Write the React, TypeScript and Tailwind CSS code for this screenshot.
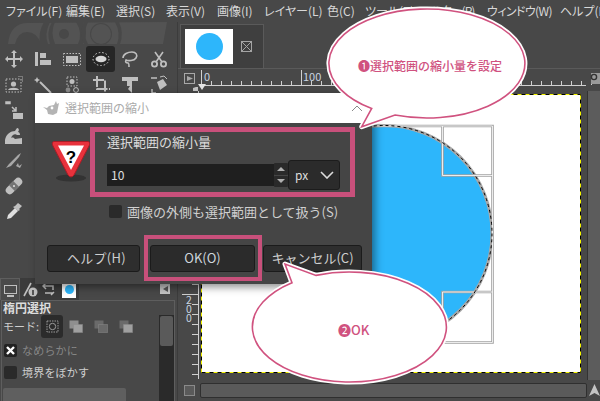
import React from "react";

const G = "#bfbfbf";
const Ico = ({ children, s = 20 }: { children: React.ReactNode; s?: number }) => (
  <svg width={s} height={s} viewBox="0 0 20 20" fill={G} stroke="none">{children}</svg>
);

const tools: Record<string, React.ReactNode> = {
  move: <path d="M10 1l3 3h-2v5h5V7l3 3-3 3v-2h-5v5h2l-3 3-3-3h2v-5H4v2l-3-3 3-3v2h5V4H7z" />,
  align: <><rect x="2" y="3" width="3" height="14" /><rect x="7" y="4" width="6" height="5" /><rect x="7" y="11" width="11" height="5" /></>,
  rect: <><rect x="4" y="7" width="12" height="7" /><rect x="1.5" y="4.5" width="17" height="12" fill="none" stroke={G} strokeWidth="1" strokeDasharray="1.5 1.5" /></>,
  ellipse: <><ellipse cx="10" cy="10" rx="5.5" ry="3.2" fill="#d8d8d8" /><ellipse cx="10" cy="10" rx="8" ry="6.5" fill="none" stroke="#d8d8d8" strokeDasharray="1.5 2" /></>,
  lasso: <path d="M3 9c0-4 5-6 9-6s6 3 4 6-8 3-10 2c-1 2 0 3 2 3 1 0 1 2 1 4" fill="none" stroke={G} strokeWidth="1.6" />,
  scissors: <><circle cx="5.5" cy="15" r="2.6" fill="none" stroke={G} strokeWidth="1.8" /><circle cx="14.5" cy="15" r="2.6" fill="none" stroke={G} strokeWidth="1.8" /><path d="M7 13l7-10M13 13L6 3" stroke={G} strokeWidth="1.6" /></>,
  fg: <><rect x="2" y="4" width="15" height="13" fill="none" stroke={G} strokeDasharray="1.5 1.5" /><circle cx="9.5" cy="9" r="2.6" /><path d="M4 15c1-3 10-3 11 0z" /><path d="M14 1h5v6h-1V2h-4z" fill="#7a7a7a" /></>,
  wand: <><path d="M7 7l11 11" stroke={G} strokeWidth="2" /><path d="M4 2l1 2 2 1-2 1-1 2-1-2-2-1 2-1z" /></>,
  color: <><rect x="5" y="2" width="10" height="9" fill="none" stroke={G} strokeDasharray="1.5 1.5" /><circle cx="10" cy="6.5" r="2.5" /><circle cx="6" cy="15" r="2.4" fill="#8a8a8a" /><circle cx="14" cy="15" r="2.4" fill="none" stroke={G} /></>,
  crop: <path d="M6 1v13h13M2 5h12v13" fill="none" stroke={G} strokeWidth="2" strokeDasharray="11 1.5" />,
  transform: <><path d="M2 2h16v4H12v12L8 14l2-3H7V6H2z" /></>,
  warp: <><path d="M8 7l6-3 4 6-7 5z" /><path d="M2 3h6M3 14v4h4" stroke={G} strokeWidth="1.4" fill="none" /><path d="M11 2l4-1 3 3" stroke={G} fill="none" /></>,
  path: <><path d="M2 1h4v1.5H2zM8 6l4 4M12 6v4H8" stroke={G} strokeWidth="1.5" fill="none" /><rect x="9" y="12" width="10" height="6" /></>,
  bucket: <path d="M1 18v-4c1-6 6-9 10-9 1-1 1-3 3-3l1 2-1 2c1 0 2 1 2 3h-3c-2-2-5 0-6 3 2-1 3 0 4 1l7-1v6z" />,
  ink: <path d="M2 17l3-4 9-9 3-2-2 4-8 9zM12 15l2-3 1 3 3-2-2 4z" fill="#a8a8a8" />,
  heal: <g transform="rotate(45 10 10)"><rect x="6" y="0" width="8" height="20" rx="4" /><rect x="6" y="7" width="8" height="6" fill="#747474" /><circle cx="10" cy="10" r="1" fill="#ddd" /></g>,
  pick: <><path d="M3 18l1-4 7-7 3 3-7 7z" fill="#e0e0e0" /><path d="M11 5l3-3 4 3-3 3 1 1-2 1-5-4z" /></>,
};

const toolRows: string[][] = [
  ["move", "align", "rect", "ellipse", "lasso", "scissors"],
  ["fg", "wand", "color", "crop", "transform", "warp"],
  ["path"], ["bucket"], ["ink"], ["heal"], ["pick"],
];

const Wilber = () => (
  <svg width="170" height="24" viewBox="0 0 170 24" className="block">
    <path d="M8 22Q10 1 28 1L167 0 163 22Z" fill="#535353" />
    <path d="M15 22Q18 10 27 10 37 10 41 22ZM44 0h6q-6 12-2 22h-8Q38 10 44 0Z" fill="#484848" />
    <circle cx="64" cy="12" r="5" fill="#484848" />
    <path d="M50 22Q46 10 52 0h3Q50 10 55 22ZM76 0q7 11 2 22h5q6-11 0-22Z" fill="#484848" />
    <circle cx="101" cy="12" r="11" fill="#484848" />
    <circle cx="101" cy="12" r="10" fill="#535353" />
    <path d="M88 0Q82 12 88 22h-4Q79 11 84 0ZM115 0q6 11 2 22h3q4-11-1-22Z" fill="#484848" />
  </svg>
);

const Toolbox = () => (
  <div className="flex-1 flex flex-col min-h-0">
    <div className="h-[24px] shrink-0"><Wilber /></div>
    <div className="flex flex-col -ml-[1px]">
      {toolRows.map((r, i) => (
        <div key={i} className={`flex items-center shrink-0 ${i < 2 ? "h-[26px]" : "h-[25px]"}`}>
          {r.map((t) => (
            <div key={t} className={`w-[29px] h-[26px] flex items-center justify-center rounded-[3px] ${t === "ellipse" ? "bg-[#262626]" : ""}`}>
              <Ico>{tools[t]}</Ico>
            </div>
          ))}
        </div>
      ))}
    </div>
  </div>
);

const Dock = () => (
  <div className="h-[123px] shrink-0 flex flex-col overflow-hidden">
    <div className="flex h-[22px] shrink-0 items-stretch">
      <div className="w-[20px] bg-[#4a4a4a] border border-b-0 border-[#5e5e5e] flex items-center justify-center">
        <svg width="15" height="14" viewBox="0 0 15 14" fill="none" stroke={G}><rect x="1.5" y="2.5" width="12" height="8" /><path d="M4 13h7" strokeWidth="2" /></svg>
      </div>
      <div className="w-[19px] bg-[#3b3b3b] flex items-center justify-center">
        <svg width="16" height="16" viewBox="0 0 16 16"><path d="M2 15L9 2" stroke={G} strokeWidth="1.6" /><circle cx="11" cy="11" r="4.5" fill={G} /><rect x="10.2" y="9" width="1.6" height="5" fill="#3b3b3b" /></svg>
      </div>
      <div className="w-[20px] bg-[#3b3b3b] flex items-center justify-center">
        <svg width="14" height="14" viewBox="0 0 14 14" fill="none" stroke={G} strokeWidth="1.5"><path d="M4 1L1 4l3 3M1 4h10v4M9 13l3-3M3 11h8" /></svg>
      </div>
      <div className="w-[20px] bg-[#3b3b3b] flex items-center justify-center">
        <div className="w-[14px] h-[18px] bg-white flex items-center justify-center"><div className="w-[9px] h-[9px] rounded-full bg-[#2db6fb]" /></div>
      </div>
      <div className="flex-1 flex items-center justify-end pr-[7px]">
        <div className="w-[10px] h-[10px] bg-[#c4c4c4] flex items-center justify-center">
          <div className="w-0 h-0 border-y-[3px] border-y-transparent border-r-[5px] border-r-[#555]" />
        </div>
      </div>
    </div>
    <div className="flex-1 min-h-0 mx-[1px] mr-[2px] border border-b-0 border-[#5e5e5e] flex flex-col">
      <div className="h-[14px] shrink-0 pl-[1px] text-[12px] leading-[14px] font-bold text-[#dcdcdc]">楕円選択</div>
      <div className="flex-1 flex min-h-0">
        <div className="flex-1 min-w-0 flex flex-col">
          <div className="flex items-center h-[23px] shrink-0 pl-[1px]">
            <span className="text-[11px] text-[#cfcfcf] w-[38px] whitespace-nowrap">モード:</span>
            <div className="w-[22px] h-[23px] bg-[#2b2b2b] rounded-[3px] flex items-center justify-center">
              <svg width="13" height="13" viewBox="0 0 13 13" fill="none" stroke="#9a9a9a"><rect x="1" y="1" width="11" height="11" strokeDasharray="1.5 1" /><circle cx="6.5" cy="6.5" r="3.2" /></svg>
            </div>
            {[0, 1, 2].map((i) => (
              <div key={i} className="w-[24px] flex justify-center ml-[1px]">
                <svg width="14" height="13" viewBox="0 0 14 13"><rect x="0.5" y="0.5" width="9" height="8" fill={i === 0 ? "#8f8f8f" : "#6a6a6a"} /><rect x="4.5" y="4.5" width="9" height="8" fill={i === 1 ? "#6a6a6a" : "#a0a0a0"} stroke="#8a8a8a" strokeDasharray="1 1" /></svg>
              </div>
            ))}
          </div>
          <div className="flex items-center gap-[5px] h-[22px] shrink-0 mt-[1px] pl-[2px]">
            <div className="w-[13px] h-[13px] bg-[#222] rounded-[2px] flex items-center justify-center">
              <svg width="9" height="9" viewBox="0 0 9 9" stroke="#fff" strokeWidth="2.4"><path d="M1 1l7 7M8 1L1 8" /></svg>
            </div>
            <span className="text-[11px] tracking-[0.2px] text-[#868686]">なめらかに</span>
          </div>
          <div className="flex items-center gap-[5px] h-[22px] shrink-0 pl-[2px]">
            <div className="w-[13px] h-[13px] bg-[#2a2a2a] rounded-[2px]" />
            <span className="text-[11px] tracking-[0.2px] text-[#cfcfcf]">境界をぼかす</span>
          </div>
          <div className="mt-[5px] ml-[1px] h-[20px] shrink-0 w-[123px] bg-[#5f5f5f] rounded-t-[2px]" />
        </div>
        <div className="w-[15px] bg-[#2a2a2a] pt-[1px] px-[1px]">
          <div className="h-[30px] bg-[#5a5a5a] rounded-[2px]" />
        </div>
      </div>
    </div>
  </div>
);

const Ruler = () => {
  const ticks = Array.from({ length: 40 }, (_, i) => 23 + i * 10);
  return (
    <svg width="422" height="22" viewBox="0 0 422 22" className="block">
      <rect x="6.5" y="4.5" width="10" height="10" fill="none" stroke="#a8a8a8" />
      <path d="M9 7l6 2.5-6 2.5z" fill="#a8a8a8" />
      <path d="M22 16.5H408" stroke="#d0d0d0" />
      {ticks.map((x) => <path key={x} d={`M${x}.5 ${(x - 23) % 100 === 0 ? 1 : 12}V16`} stroke="#d0d0d0" />)}
      <text x="26" y="12" fontSize="11" fill="#c9d4e0">0</text>
      <text x="125" y="12" fontSize="11" fill="#c9d4e0">100</text>
      <path d="M20 15h8l-4 6z" fill="#e4e4e4" />
      <path d="M15 19l3-1h2v4h-5z" fill="#c4c4c4" />
      <rect x="413" y="4" width="9" height="11" fill="#9a9a9a" />
      <circle cx="416" cy="8" r="2.6" fill="none" stroke="#333" strokeWidth="1.4" />
    </svg>
  );
};

const VRuler = () => (
  <div className="w-[21px]">
    <svg width="21" height="289" viewBox="0 0 21 289" className="block">
      <path d="M20.5 0V288" stroke="#d0d0d0" />
      {Array.from({ length: 29 }, (_, i) => 3 + i * 10).map((y) => <path key={y} d={`M${y === 203 ? 4 : 14} ${y}.5H21`} stroke="#d0d0d0" />)}
      {["2", "0", "0"].map((c, i) => <text key={i} x="8" y={213 + i * 9} fontSize="10.5" fill="#c9d4e0">{c}</text>)}
    </svg>
  </div>
);

const ImageCanvas = () => {
  const Guide = ({ d }: { d: string }) => (
    <>
      <path d={d} fill="none" stroke="#a2a2a2" strokeWidth="2.6" />
      <path d={d} fill="none" stroke="#ffffff" strokeWidth="0.8" />
    </>
  );
  return (
    <svg width="380" height="279" viewBox="0 0 380 279" className="block">
      <rect width="380" height="279" fill="#fff" />
      <circle cx="183" cy="139.5" r="108" fill="#2db6fb" stroke="#a8a8a8" strokeWidth="3" />
      <Guide d="M150 32H291.5V248.5H241.5V198H291.5M241.5 32V81.5H291.5" />
      <circle cx="183" cy="139.5" r="108" fill="none" stroke="#000" strokeDasharray="3 3" />
      <rect x="0.5" y="0.5" width="379" height="278" fill="none" stroke="#f5f500" />
      <rect x="0.5" y="0.5" width="379" height="278" fill="none" stroke="#000" strokeDasharray="4 4" />
    </svg>
  );
};

const Dialog = () => (
  <div className="absolute left-[35px] top-[93px] w-[337px] h-[191px] flex flex-col bg-[#454545] shadow-[3px_3px_8px_rgba(0,0,0,0.45)]">
    <div className="h-[30px] bg-white flex items-center pl-[8px] pr-[8px] gap-[5px]">
      <svg width="17" height="14" viewBox="0 0 17 14"><path d="M0 6l4 1 2-2 5-1 2-4 1 3 2-1-1 5-1 5-4 2-5-1-1-4z" fill="#b4b4b4" /><circle cx="9" cy="7" r="1.4" fill="#fff" /></svg>
      <span className="text-[12px] text-[#aaaaaa]">選択範囲の縮小</span>
      <svg className="ml-auto mr-[1px]" width="12" height="7" viewBox="0 0 12 7" fill="none" stroke="#8a8a8a"><path d="M1 6l5-5 5 5" /></svg>
    </div>
    <div className="flex mt-[4px] h-[70px]">
      <div className="w-[55px] pl-[16px] pt-[13px]">
        <svg width="40" height="42" viewBox="0 0 40 42">
          <ellipse cx="20" cy="38" rx="15" ry="3.5" fill="#333" />
          <path d="M3 1.5H37Q40 2 38 6L23 35Q20 39 17 35L2 6Q0 2 3 1.5Z" fill="#e8323c" stroke="#a81c26" />
          <path d="M7 5.5H33L20 30Z" fill="#ffffff" />
          <text x="20" y="23" fontSize="17" fontWeight="700" textAnchor="middle" fill="#000" fontFamily="Liberation Sans">?</text>
        </svg>
      </div>
      <div className="w-[265px] h-[70px] border-[5px] border-[#c8507b] pl-[12px] pr-[10px] flex flex-col">
        <div className="h-[19px] mt-[1px] text-[13px] leading-[18px] text-[#dcdcdc]">選択範囲の縮小量</div>
        <div className="flex items-center h-[30px] mt-[8px]">
          <div className="w-[167px] h-[22px] bg-[#1f1f1f] pl-[4px] text-[12px] leading-[22px] text-[#e0e0e0]">10</div>
          <div className="w-[14px] h-[24px] flex flex-col gap-[1px]">
            {[0, 1].map((i) => (
              <div key={i} className="flex-1 bg-[#2a2a2a] flex items-center justify-center rounded-[1px]">
                <div className={`w-0 h-0 border-x-[4px] border-x-transparent ${i === 0 ? "border-b-[4px] border-b-[#b0b0b0]" : "border-t-[4px] border-t-[#b0b0b0]"}`} />
              </div>
            ))}
          </div>
          <div className="w-[52px] h-[30px] bg-[#2b2b2b] border border-[#1c1c1c] rounded-[3px] flex items-center pl-[6px] pr-[5px] justify-between">
            <span className="text-[12px] text-[#dcdcdc]">px</span>
            <svg width="14" height="8" viewBox="0 0 14 8" fill="none" stroke="#dcdcdc" strokeWidth="1.6"><path d="M1 1l6 6 6-6" /></svg>
          </div>
        </div>
      </div>
    </div>
    <div className="flex items-center gap-[5px] pl-[74px] mt-[8px] h-[13px]">
      <div className="w-[13px] h-[13px] rounded-[2px] bg-[#2a2a2a]" />
      <span className="text-[13px] leading-[16px] whitespace-nowrap text-[#d0d0d0]">画像の外側も選択範囲として扱う(S)</span>
    </div>
    <div className="flex items-center pl-[12px] mt-[17px]">
      <div className="w-[93px] h-[27px] pl-[6px] bg-[#2e2e2e] border border-[#1b1b1b] rounded-[3px] flex items-center justify-center text-[13px] tracking-[0.3px] text-[#cfcfcf]">ヘルプ(H)</div>
      <div className="ml-[4px] w-[118px] h-[46px] border-[4px] border-[#c8507b] pl-[2px] pr-[3px] flex items-center">
        <div className="flex-1 h-[27px] bg-[#2b2b2b] border border-[#1b1b1b] rounded-[3px] flex items-center justify-center text-[13px] text-[#cfd6dd]">OK(O)</div>
      </div>
      <div className="ml-[1px] w-[99px] h-[27px] bg-[#2e2e2e] border border-[#1b1b1b] rounded-[3px] flex items-center justify-center text-[13px] text-[#cfcfcf]">キャンセル(C)</div>
    </div>
  </div>
);

const Callout = ({ d, className, textClass, text, w, h }: { d: string; className: string; textClass: string; text: string; w: number; h: number }) => (
  <div className={`absolute ${className}`}>
    <svg width={w} height={h} viewBox={`0 0 ${w} ${h}`} className="block">
      <path d={d} fill="#fff" stroke="#fff" strokeWidth="5" strokeLinejoin="round" />
      <path d={d} fill="#fff" stroke="#d0527f" strokeWidth="1.6" strokeLinejoin="miter" />
    </svg>
    <div className={`absolute whitespace-nowrap font-medium text-[#d0527f] leading-[16px] ${textClass}`}>{text}</div>
  </div>
);

export default function App() {
  const menu: [string, number, string][] = [
    ["ファイル(F)", 60, ""], ["編集(E)", 50, ""], ["選択(S)", 50, ""], ["表示(V)", 51, ""], ["画像(I)", 47, ""],
    ["レイヤー(L)", 63, ""], ["色(C)", 38, ""], ["ツール(T)", 49, ""], ["フィルター(R)", 73, "tracking-[-1px]"], ["ウィンドウ(W)", 73, "tracking-[-0.6px]"], ["ヘルプ(H)", 40, ""],
  ];
  return (
    <div className="relative w-[600px] h-[401px] overflow-hidden bg-[#484848] flex flex-col font-['Noto_Sans_CJK_JP','Noto_Sans',sans-serif]">
      <div className="h-[22px] flex items-center pl-[6px] shrink-0">
        {menu.map(([m, w, c]) => (
          <div key={m} style={{ width: w }} className={`shrink-0 text-[12px] leading-[22px] text-[#d8d8d8] whitespace-nowrap [font-feature-settings:'palt'] ${c}`}>{m}</div>
        ))}
      </div>
      <div className="flex-1 flex min-h-0">
        <aside className="w-[178px] flex flex-col border-r border-[#3c3c3c]">
          <Toolbox />
          <Dock />
        </aside>
        <main className="flex-1 flex flex-col min-w-0">
          <div className="h-[47px] shrink-0 flex pt-[2px] pl-[2px] border-b border-[#5a5a5a]">
            <div className="w-[84px] bg-[#3f3f3f] border border-b-0 border-[#5a5a5a] flex items-center pl-[4px] gap-[8px]">
              <div className="w-[48px] h-[35px] bg-white flex items-center justify-center">
                <div className="w-[27px] h-[27px] rounded-full bg-[#2db6fb]" />
              </div>
              <div className="w-[11px] h-[11px] border border-[#a4a4a4] flex items-center justify-center">
                <svg width="9" height="9" viewBox="0 0 9 9" stroke="#a4a4a4"><path d="M0 0l9 9M9 0L0 9" /></svg>
              </div>
            </div>
          </div>
          <div className="h-[22px] shrink-0"><Ruler /></div>
          <div className="flex-1 flex min-h-0">
            <VRuler />
            <div className="flex-1 pl-[2px] pt-[3px]"><ImageCanvas /></div>
            <div className="w-[13px] bg-[#5c5c5c] border-l border-[#333]" />
          </div>
          <div className="h-[21px] shrink-0 flex items-center pl-[6px] pb-[1px]">
            <div className="w-[11px] h-[11px] border border-[#8a8a8a] bg-[#5a5a5a]" />
            <div className="ml-[5px] w-[388px] h-[15px] bg-[#5a5a5a] border border-[#2f2f2f] rounded-[2px]" />
            <svg className="ml-[2px]" width="11" height="12" viewBox="0 0 11 12"><path d="M5.5 0L11 12 5.5 9 0 12z" fill="#c4c4c4" /></svg>
          </div>
        </main>
      </div>
      <Dialog />
      <Callout
        className="left-[320px] top-0"
        w={215} h={135}
        d="M51.7 108.5A98 54.5 0 1 1 75 115L41.7 126.7Z"
        textClass="left-[38px] top-[58px] text-[12px]"
        text="❶選択範囲の縮小量を設定"
      />
      <Callout
        className="left-[245px] top-[255px]"
        w={210} h={135}
        d="M71 20.4A97 55 0 1 1 47 27.7L40 9Z"
        textClass="left-[93px] top-[67px] text-[13px]"
        text="❷OK"
      />
    </div>
  );
}
